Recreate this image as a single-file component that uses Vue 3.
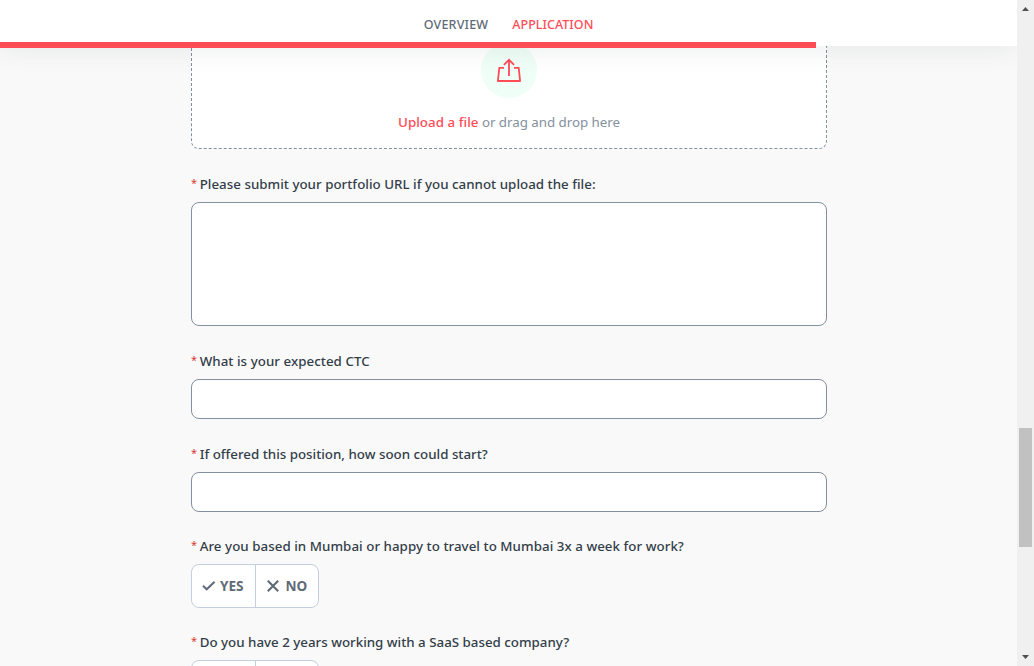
<script setup>
import { ref } from 'vue'

const progress = 816.4
const portfolio = ref('')
const ctc = ref('')
const start = ref('')
const questions = [
  { id: 'q-city', text: 'Are you based in Mumbai or happy to travel to Mumbai 3x a week for work?' },
  { id: 'q-saas', text: 'Do you have 2 years working with a SaaS based company?' },
]
</script>

<template>
  <div class="page">
    <div class="view">
      <header class="header">
        <nav class="tabs">
          <a class="tab overview">OVERVIEW</a>
          <a class="tab active">APPLICATION</a>
        </nav>
        <div class="progress" :style="{ width: progress + 'px' }"></div>
      </header>
      <main class="form">
        <section class="drop">
          <div class="circle">
            <svg width="24" height="24" viewBox="0 0 24 24" fill="none" stroke="#ff4c57" stroke-width="1.8">
              <path d="M7 9.9H2.3L.9 23H23.1L21.7 9.9H17" stroke-linejoin="round" />
              <path d="M12 17.9V2M6.9 6.8L12 1.8L17.1 6.8" />
            </svg>
          </div>
          <p class="hint"><span class="link">Upload a file</span> or drag and drop here</p>
        </section>

        <div class="field">
          <label class="label"><i>*</i><span class="q-portfolio">Please submit your portfolio URL if you cannot upload the file:</span></label>
          <textarea v-model="portfolio" class="box area"></textarea>
        </div>
        <div class="field">
          <label class="label"><i>*</i><span class="q-ctc">What is your expected CTC</span></label>
          <input v-model="ctc" class="box" type="text" />
        </div>
        <div class="field">
          <label class="label"><i>*</i><span class="q-start">If offered this position, how soon could start?</span></label>
          <input v-model="start" class="box" type="text" />
        </div>
        <div v-for="q in questions" :key="q.id" class="field choice">
          <div class="label"><i>*</i><span :class="q.id">{{ q.text }}</span></div>
          <div class="toggle">
            <button class="opt" type="button">
              <svg class="check" width="14" height="12" viewBox="0 0 14 12" fill="none" stroke="#5f6b78" stroke-width="2">
                <path d="M1 5.8L4.7 9.3L12.6 1.8" />
              </svg>
              <span>YES</span>
            </button>
            <button class="opt" type="button">
              <svg class="cross" width="12" height="12" viewBox="0 0 12 12" fill="none" stroke="#5f6b78" stroke-width="2.1">
                <path d="M.8.8L11.2 11.2M11.2.8L.8 11.2" />
              </svg>
              <span>NO</span>
            </button>
          </div>
        </div>
      </main>
    </div>
    <aside class="scrollbar">
      <svg class="arrow" width="17" height="17" viewBox="0 0 17 17" fill="#505050"><path d="M5 11L8.5 7L12 11Z" /></svg>
      <div class="thumb"></div>
      <svg class="arrow" width="17" height="17" viewBox="0 0 17 17" fill="#505050"><path d="M5 6L8.5 10L12 6Z" /></svg>
    </aside>
  </div>
</template>

<style>
body { margin: 0; overflow: hidden; }
</style>

<style scoped>
* { box-sizing: border-box; }
.page {
  display: flex;
  width: 1034px;
  height: 666px;
  overflow: hidden;
  background: #f9f9f9;
  font-family: "Noto Sans", "Open Sans", sans-serif;
  font-size: 13.333px;
  color: #333e49;
}
.view { width: 1017px; height: 666px; overflow: hidden; }
.header {
  position: relative;
  z-index: 2;
  height: 46px;
  background: #fff;
  box-shadow: 0 6px 24px rgba(50, 65, 60, .08);
}
.tabs { display: flex; justify-content: center; gap: 24px; height: 46px; padding-top: 15px; }
.tab { font-size: 12.5px; font-weight: 500; line-height: 19px; color: #5f6b78; white-space: nowrap; }
.tab.overview { letter-spacing: .2px; }
.tab.active { color: #ff4c57; letter-spacing: .03px; }
.progress { position: absolute; left: 0; top: 42px; height: 6px; background: #ff4c57; }
.form { width: 636px; margin-left: 191px; }
.drop {
  display: flex;
  flex-direction: column;
  align-items: center;
  height: 149px;
  margin-top: -46px;
  padding-top: 42px;
  border: 1px dashed #8090a0;
  border-top: 0;
  border-radius: 0 0 8px 8px;
  background: #fff;
}
.circle {
  display: flex;
  align-items: center;
  justify-content: center;
  width: 56px;
  height: 56px;
  border-radius: 50%;
  background: #effef7;
}
.hint { margin: 14px 0 0; font-size: 13.333px; line-height: 20px; letter-spacing: -.03px; color: #84909d; white-space: nowrap; }
.link { color: #ff4c57; font-weight: 500; letter-spacing: .04px; }
.field { padding-top: 25px; }
.choice { padding-top: 24px; }
.label { display: flex; height: 20px; margin-bottom: 8px; line-height: 20px; font-weight: 500; white-space: nowrap; }
.label i { width: 8.7px; flex: none; font-style: normal; font-size: 11px; font-weight: 400; line-height: 17px; color: #d93a35; }
.q-portfolio { letter-spacing: .017px; }
.q-ctc, .q-city { letter-spacing: .04px; }
.box {
  display: block;
  width: 636px;
  height: 40px;
  margin: 0;
  padding: 8px 12px;
  border: 1px solid #8390a0;
  border-radius: 8px;
  background: #fff;
  outline: 0;
  resize: none;
  font: inherit;
}
.area { height: 124px; }
.toggle { display: flex; width: 128px; height: 44px; border: 1px solid #c3cfde; border-radius: 8px; background: #fff; }
.opt {
  display: flex;
  align-items: center;
  width: 63px;
  padding: 0 0 0 10px;
  border: 0;
  background: none;
  color: #5f6b78;
  font: 700 13.6px/20px "Noto Sans", sans-serif;
}
.opt:first-child { width: 64px; border-right: 1px solid #c3cfde; }
.check { margin-right: 4px; flex: none; }
.cross { margin: 0 7px 0 1px; flex: none; }
.scrollbar { display: flex; flex-direction: column; width: 17px; height: 666px; background: #f0f0f0; }
.arrow { display: block; flex: none; }
.thumb { width: 13px; height: 119px; margin: 411px 0 102px 2px; background: #c1c1c1; }
</style>
